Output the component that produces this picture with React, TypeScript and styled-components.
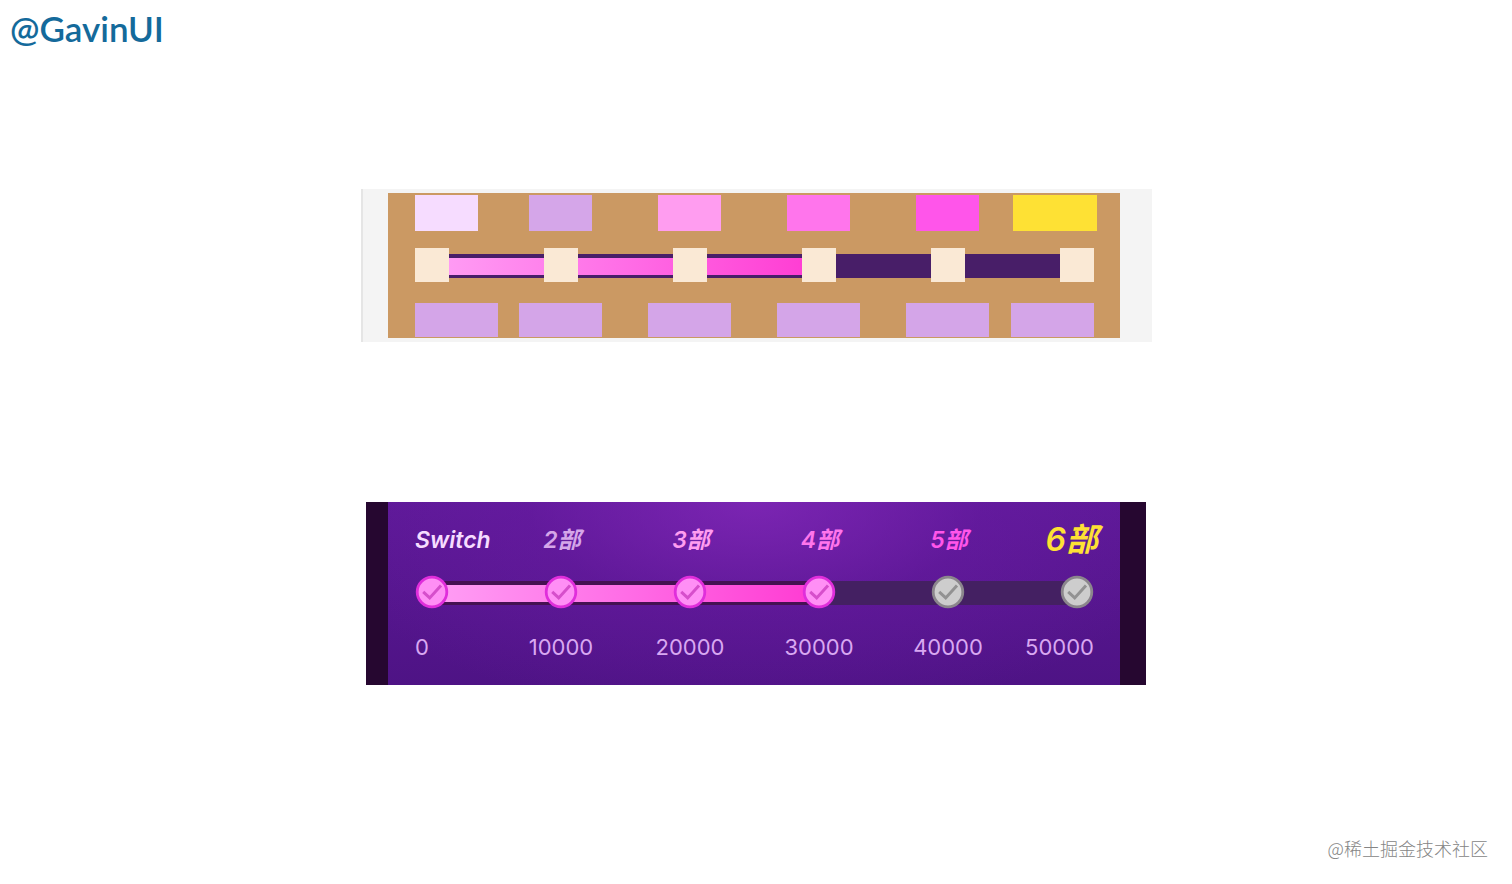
import React from "react";
import styled, { createGlobalStyle } from "styled-components";

const GlobalStyle = createGlobalStyle`
  *, *::before, *::after { box-sizing: border-box; }
  body {
    margin: 0;
    background: #ffffff;
    font-family: Inter, "Noto Sans CJK SC", sans-serif;
  }
  h1, ol { margin: 0; padding: 0; font-weight: inherit; }
  ol { list-style: none; }
`;

const Page = styled.div`
  min-height: 100vh;
  display: flex;
  flex-direction: column;
`;

const Header = styled.header`
  padding: 4px 12px 0 10px;
`;

const Brand = styled.h1`
  color: #146a9b;
  font-family: Lato, sans-serif;
  font-size: 35px;
  line-height: 48px;
  font-weight: 600;
`;

const Main = styled.main`
  display: flex;
  flex-direction: column;
  align-items: center;
  gap: 160px;
  padding: 137px 16px 0;
`;

const LayoutCard = styled.section`
  width: 100%;
  max-width: 791px;
  padding: 4px 32px 4px 25px;
  border-left: 2px solid #e5e5e5;
  background: #f4f4f4;
`;

const LayoutBody = styled.div`
  padding: 2px 26px 1px 27px;
  background: #cb9963;
`;

const StageCard = styled.section`
  width: 100%;
  max-width: 780px;
  border: solid #260730;
  border-width: 0 26px 0 22px;
`;

const StageBody = styled.div`
  padding: 14px 26px 20px 27px;
  background:
    radial-gradient(ellipse 62% 120% at 50% 0%, rgba(136, 42, 190, 0.7), rgba(110, 28, 168, 0.38) 50%, rgba(90, 22, 146, 0) 100%),
    linear-gradient(#5d1997, #4e1385);
`;

const StepRow = styled.ol<{ $height: number; $top?: number }>`
  display: grid;
  grid-template-columns: repeat(6, 34px);
  justify-content: space-between;
  align-items: center;
  height: ${(p) => p.$height}px;
  margin-top: ${(p) => p.$top ?? 0}px;
`;

const Step = styled.li`
  display: flex;
  justify-content: center;
  align-items: center;
  white-space: nowrap;
  &:first-child { justify-content: flex-start; }
  &:last-child { justify-content: flex-end; }
`;

const Block = styled.span<{ $width: number; $height: number; $color: string; $outset?: number }>`
  flex: none;
  width: ${(p) => p.$width}px;
  height: ${(p) => p.$height}px;
  margin-right: ${(p) => -(p.$outset ?? 0)}px;
  background: ${(p) => p.$color};
`;

const Slider = styled.div<{ $top: number }>`
  display: grid;
  margin-top: ${(p) => p.$top}px;
  & > * { grid-area: 1 / 1; }
`;

const Track = styled.div<{ $color: string }>`
  height: 24px;
  margin: 6px 17px 0;
  padding: 4px 0 3px;
  background: ${(p) => p.$color};
`;

const Fill = styled.div<{ $edge?: string }>`
  width: 60%;
  height: 17px;
  background: linear-gradient(90deg, #ff9ff5, #ff6de6 50%, #ff3ad2);
  box-shadow: 0 -4px 0 ${(p) => p.$edge ?? "transparent"}, 0 3px 0 ${(p) => p.$edge ?? "transparent"};
`;

const Label = styled.span<{ $color: string; $large?: boolean }>`
  color: ${(p) => p.$color};
  font-size: ${(p) => (p.$large ? 32 : 23)}px;
  line-height: 48px;
  font-weight: 600;
  font-style: italic;
  margin-right: ${(p) => (p.$large ? -4 : 0)}px;
  ${Step}:not(:first-child) > & { padding-left: 2px; }
`;

const Value = styled.span`
  color: #d9a8f2;
  font-size: 22px;
  line-height: 36px;
`;

const Footer = styled.footer`
  margin-top: auto;
  padding: 0 24px 23px;
  text-align: right;
  color: #858585;
  font-family: "Noto Sans CJK SC", sans-serif;
  font-size: 18px;
  line-height: 26px;
  font-weight: 300;
`;

const stages = [
  { label: "Switch", color: "#f6dcff", value: "0", done: true },
  { label: "2部", color: "#d5a6e9", value: "10000", done: true },
  { label: "3部", color: "#ff9df0", value: "20000", done: true },
  { label: "4部", color: "#ff75ec", value: "30000", done: true },
  { label: "5部", color: "#ff55ea", value: "40000", done: false },
  { label: "6部", color: "#fee134", value: "50000", done: false },
];

const last = stages.length - 1;

function CheckMark({ done }: { done: boolean }) {
  return (
    <svg width="34" height="34" viewBox="0 0 34 34" role="img" aria-label={done ? "reached" : "not reached"}>
      <circle cx="17" cy="17" r="14.8" fill={done ? "#ff8ff5" : "#cdcdcd"} stroke={done ? "#e02edb" : "#8b868c"} strokeWidth="2.8" />
      <path d="M8.2 16.8L14.7 22.9L26 10.4" fill="none" stroke={done ? "#d64fcb" : "#929292"} strokeWidth="3" />
    </svg>
  );
}

export default function App() {
  return (
    <Page>
      <GlobalStyle />
      <Header>
        <Brand>@GavinUI</Brand>
      </Header>
      <Main>
        <LayoutCard aria-label="Layout blocks">
          <LayoutBody>
            <StepRow $height={36}>
              {stages.map((s, i) => (
                <Step key={s.value}>
                  <Block $width={i === last ? 84 : 63} $height={36} $color={s.color} $outset={i === last ? 3 : 0} />
                </Step>
              ))}
            </StepRow>
            <Slider $top={17}>
              <Track $color="#481e68">
                <Fill />
              </Track>
              <StepRow $height={34}>
                {stages.map((s) => (
                  <Step key={s.value}>
                    <Block $width={34} $height={34} $color="#fae9d5" />
                  </Step>
                ))}
              </StepRow>
            </Slider>
            <StepRow $height={34} $top={21}>
              {stages.map((s) => (
                <Step key={s.value}>
                  <Block $width={83} $height={34} $color="#d4a5e8" />
                </Step>
              ))}
            </StepRow>
          </LayoutBody>
        </LayoutCard>
        <StageCard aria-label="Stage progress">
          <StageBody>
            <StepRow $height={48}>
              {stages.map((s, i) => (
                <Step key={s.value}>
                  <Label $color={s.color} $large={i === last}>{s.label}</Label>
                </Step>
              ))}
            </StepRow>
            <Slider $top={11}>
              <Track $color="#442062">
                <Fill $edge="#451152" />
              </Track>
              <StepRow $height={34}>
                {stages.map((s) => (
                  <Step key={s.value}>
                    <CheckMark done={s.done} />
                  </Step>
                ))}
              </StepRow>
            </Slider>
            <StepRow $height={36} $top={20}>
              {stages.map((s) => (
                <Step key={s.value}>
                  <Value>{s.value}</Value>
                </Step>
              ))}
            </StepRow>
          </StageBody>
        </StageCard>
      </Main>
      <Footer>@稀土掘金技术社区</Footer>
    </Page>
  );
}
